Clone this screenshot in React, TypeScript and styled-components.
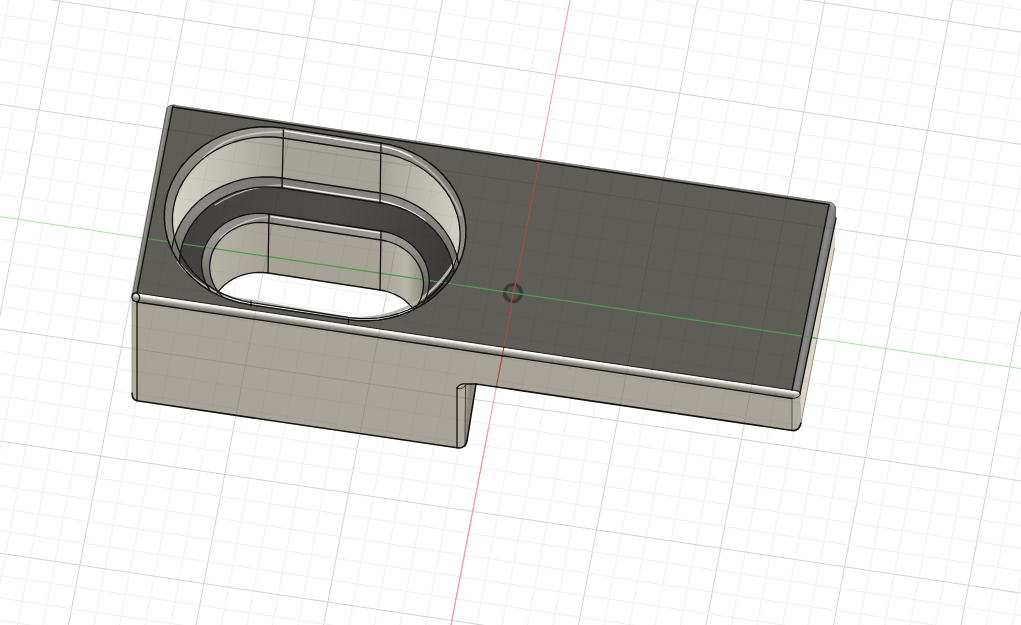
import React from "react";
import styled, { createGlobalStyle } from "styled-components";

type Pt = [number, number];

const GlobalStyle = createGlobalStyle`
  html, body {
    margin: 0;
    padding: 0;
    height: 100%;
    background: #ffffff;
    overflow: hidden;
    font-family: "Liberation Sans", Arial, sans-serif;
  }
`;

const Viewport = styled.main`
  display: flex;
  width: 1021px;
  height: 625px;
  overflow: hidden;
  background: #ffffff;
`;

const Canvas = styled.svg`
  display: block;
  width: 1021px;
  height: 625px;
  filter: blur(0.4px);
`;

const GridLine = styled.line<{ $major: boolean; $tone: "paper" | "model" }>`
  stroke: ${(p) =>
    p.$tone === "paper"
      ? p.$major
        ? "#d2d2d2"
        : "#f0f0f0"
      : p.$major
      ? "rgba(30,28,20,0.12)"
      : "rgba(30,28,20,0.04)"};
  stroke-width: 1;
`;

const Axis = styled.line<{ $color: string; $width?: number }>`
  stroke: ${(p) => p.$color};
  stroke-width: ${(p) => p.$width ?? 1};
`;

const Face = styled.path<{ $fill: string }>`
  fill: ${(p) => p.$fill};
  stroke: none;
`;

const Edge = styled.path<{ $width?: number }>`
  fill: none;
  stroke: #111110;
  stroke-width: ${(p) => p.$width ?? 1.3};
  stroke-linecap: round;
  stroke-linejoin: round;
`;

const Shine = styled.path<{ $color: string; $width: number }>`
  fill: none;
  stroke: ${(p) => p.$color};
  stroke-width: ${(p) => p.$width};
  stroke-linecap: round;
`;

const OriginRing = styled.circle`
  fill: rgba(40, 38, 36, 0.2);
  stroke: rgba(36, 35, 34, 0.55);
  stroke-width: 3.5;
`;

// one grid step along each axis, as drawn on screen
const U: Pt = [124, 18.5];
const V: Pt = [-20.8, 109];

const stadium = (left: Pt, right: Pt, r: number) => {
  const c1: Pt = [left[0] + r * V[0], left[1] + r * V[1]];
  const c2: Pt = [right[0] + r * V[0], right[1] + r * V[1]];
  const pts: string[] = [];
  const arc = (c: Pt, from: number) => {
    for (let i = 0; i <= 30; i++) {
      const a = from + (i / 30) * Math.PI;
      const x = c[0] + r * (U[0] * Math.cos(a) + V[0] * Math.sin(a));
      const y = c[1] + r * (U[1] * Math.cos(a) + V[1] * Math.sin(a));
      pts.push(`${x.toFixed(1)},${y.toFixed(1)}`);
    }
  };
  arc(c2, -Math.PI / 2);
  arc(c1, Math.PI / 2);
  return `M${pts.join(" L")} Z`;
};

const rim = stadium([283, 128], [381, 143], 0.81);
const rimInner = stadium([283, 138], [381, 153], 0.755);
const ledgeOuter = stadium([282, 178], [380, 193], 0.76);
const ledgeInner = stadium([282, 188], [381, 203], 0.7);
const holeOuter = stadium([269, 214], [381, 231], 0.46);
const holeInner = stadium([269, 223], [381, 240], 0.405);
const holeBottom = stadium([268, 273], [380, 290], 0.4);

const silhouette =
  "M167,108 Q169,104.5 175,105 L830,202 Q834,203 835.5,207 L835.5,218 L834.5,248 L801,423 Q799,431.5 792,430.5 L476,384 L467,441 Q465,449 457,447.8 L137,400.8 Q132,399.5 132,393 L132,297 Z";

const GridLines = ({ tone }: { tone: "paper" | "model" }) => {
  const lines: React.ReactElement[] = [];
  for (let i = -24; i <= 24; i++) {
    if (i === 0) continue;
    const x = 570 + 25.5 * i;
    lines.push(
      <GridLine key={`v${i}`} $tone={tone} $major={i % 5 === 0} x1={x} y1={0} x2={x - 119} y2={625} />
    );
  }
  for (let j = -18; j <= 20; j++) {
    if (j === 0) continue;
    const y = 216.6 + 22.44 * j;
    lines.push(
      <GridLine key={`h${j}`} $tone={tone} $major={j % 5 === 0} x1={0} y1={y} x2={1021} y2={y + 152.1} />
    );
  }
  return <g>{lines}</g>;
};

const Pocket = () => (
  <g clipPath="url(#rimClip)">
    <Face $fill="url(#bandGrad)" d={rim} />
    <Face $fill="url(#wallGrad)" d={rimInner} />
    <Face $fill="url(#bandGrad2)" d={ledgeOuter} />
    <Face $fill="url(#ledgeGrad)" d={ledgeInner} />
    <Face $fill="url(#bandGrad3)" d={holeOuter} />
    <Face $fill="url(#innerWallGrad)" d={holeInner} />
  </g>
);

const ModelBody = () => (
  <g>
    <Face $fill="#a8a598" d={silhouette} />
    <Face $fill="#b1aea0" d="M132,297 L137,300 L137,400.8 Q132,399.5 132,393 Z" />
    <Face $fill="#d9d4c5" d="M835.5,218 L834.5,248 L801,423 L800,393 Z" />
    <Face $fill="#7d7b77" d="M167,108 L175,105 L830,202 L829,205 L173,107 Z" />
    <Face $fill="#5f5d58" d="M173,107 L829,204.5 L792,390 L137,293 Z" />
    <Face $fill="url(#leftBand)" d="M167,108 L173,107 L137,293 L132,297 Z" />
    <Face $fill="url(#rightBand)" d="M829,204.5 L835.5,207 L835.5,218 L800,393 L792,390 Z" />
    <Face $fill="url(#frontBand)" d="M137,293 L792,390 L800,393 L792,398.5 L137,302 L132,297 Z" />
    <Face $fill="#b2afa3" d="M792,398.5 L800,393 L801,423 Q799,431.5 792,430.5 Z" />
    <Face $fill="url(#notchGrad)" d="M466,385 L476,384 L466.5,441 Q466,445 465,446 Z" />
    <Face $fill="#b0ada0" d="M457,388 Q460,383.5 466,384 L465,446 Q462,448 457,447.8 Z" />
    <Pocket />
  </g>
);

const Opening = () => (
  <g clipPath="url(#rimClip)">
    <g clipPath="url(#holeClip)">
      <rect x={150} y={240} width={340} height={120} fill="#ffffff" />
      <GridLines tone="paper" />
    </g>
  </g>
);

const App = () => (
  <>
    <GlobalStyle />
    <Viewport>
      <Canvas viewBox="0 0 1021 625" xmlns="http://www.w3.org/2000/svg">
        <defs>
          <clipPath id="modelClip">
            <path d={silhouette} />
          </clipPath>
          <clipPath id="rimClip">
            <path d={rim} />
          </clipPath>
          <clipPath id="holeClip">
            <path d={holeBottom} />
          </clipPath>
          <linearGradient id="wallGrad" gradientUnits="userSpaceOnUse" x1="170" y1="190" x2="462" y2="190">
            <stop offset="0" stopColor="#d6d3c9" />
            <stop offset="0.12" stopColor="#c9c6bb" />
            <stop offset="0.38" stopColor="#a6a398" />
            <stop offset="0.72" stopColor="#a5a296" />
            <stop offset="0.92" stopColor="#c6c3b9" />
            <stop offset="1" stopColor="#d2cfc6" />
          </linearGradient>
          <linearGradient id="innerWallGrad" gradientUnits="userSpaceOnUse" x1="210" y1="260" x2="424" y2="260">
            <stop offset="0" stopColor="#b5b2a6" />
            <stop offset="0.28" stopColor="#a6a396" />
            <stop offset="0.78" stopColor="#a6a396" />
            <stop offset="0.92" stopColor="#b8b5a9" />
            <stop offset="1" stopColor="#8a877c" />
          </linearGradient>
          <linearGradient id="ledgeGrad" gradientUnits="userSpaceOnUse" x1="180" y1="200" x2="455" y2="300">
            <stop offset="0" stopColor="#413f3d" />
            <stop offset="0.5" stopColor="#504e4b" />
            <stop offset="1" stopColor="#393736" />
          </linearGradient>
          <linearGradient id="bandGrad" gradientUnits="userSpaceOnUse" x1="0" y1="128" x2="0" y2="240">
            <stop offset="0" stopColor="#9a9893" />
            <stop offset="0.5" stopColor="#807e78" />
            <stop offset="1" stopColor="#8f8d88" />
          </linearGradient>
          <linearGradient id="bandGrad2" gradientUnits="userSpaceOnUse" x1="0" y1="178" x2="0" y2="270">
            <stop offset="0" stopColor="#7a7873" />
            <stop offset="0.3" stopColor="#8e8c86" />
            <stop offset="1" stopColor="#6c6a65" />
          </linearGradient>
          <linearGradient id="bandGrad3" gradientUnits="userSpaceOnUse" x1="0" y1="214" x2="0" y2="290">
            <stop offset="0" stopColor="#8a8883" />
            <stop offset="0.3" stopColor="#9c9a94" />
            <stop offset="1" stopColor="#66645f" />
          </linearGradient>
          <linearGradient id="leftBand" gradientUnits="userSpaceOnUse" x1="147" y1="200" x2="155" y2="201.55">
            <stop offset="0" stopColor="#5f5d59" />
            <stop offset="0.5" stopColor="#979692" />
            <stop offset="1" stopColor="#5f5d59" />
          </linearGradient>
          <linearGradient id="rightBand" gradientUnits="userSpaceOnUse" x1="810" y1="297" x2="818" y2="298.6">
            <stop offset="0" stopColor="#6b6a68" />
            <stop offset="0.5" stopColor="#8d8d8d" />
            <stop offset="1" stopColor="#77767a" />
          </linearGradient>
          <linearGradient id="frontBand" gradientUnits="userSpaceOnUse" x1="465" y1="341.5" x2="463.7" y2="350.3">
            <stop offset="0" stopColor="#e8e7e2" />
            <stop offset="0.2" stopColor="#ffffff" />
            <stop offset="0.4" stopColor="#c8c6be" />
            <stop offset="0.65" stopColor="#8e8b82" />
            <stop offset="1" stopColor="#6f6d66" />
          </linearGradient>
          <linearGradient id="notchGrad" gradientUnits="userSpaceOnUse" x1="464" y1="410" x2="474" y2="411">
            <stop offset="0" stopColor="#a9a698" />
            <stop offset="0.5" stopColor="#85827a" />
            <stop offset="1" stopColor="#9d9a8d" />
          </linearGradient>
        </defs>

        <GridLines tone="paper" />
        <Axis $color="#f29b9b" x1={570} y1={0} x2={451} y2={625} />
        <Axis $color="#a6e4a2" x1={0} y1={216.6} x2={1021} y2={368.7} />

        <ModelBody />

        <g clipPath="url(#modelClip)">
          <GridLines tone="model" />
          <Axis $color="#a54c48" $width={1.2} x1={570} y1={0} x2={451} y2={625} />
          <Axis $color="#4f9b47" $width={1.2} x1={0} y1={216.6} x2={1021} y2={368.7} />
        </g>

        <Opening />
        <Axis $color="#f29b9b" x1={488.2} y1={430} x2={451} y2={625} />

        {/* fillet highlights */}
        <Shine $color="#f4f4f1" $width={1.6} d="M285,131 L381,146 Q398,149 412,157" />
        <Shine $color="#c7c6c1" $width={1.8} d="M283,132 Q250,131 225,142 Q195,158 178,195" />
        <Shine $color="#b8b7b1" $width={1.6} d="M412,158 Q445,176 461,215" />
        <Shine $color="#f1f1ed" $width={1.3} d="M284,186 L380,200.5 Q405,206 425,220" />
        <Shine $color="#b5b4ae" $width={1.3} d="M282,185 Q245,186 215,205" />
        <Shine $color="#e9e9e5" $width={1.4} d="M271,216.5 L381,233" />
        <Shine $color="#c9c8c2" $width={1.2} d="M268,217 Q240,219 220,238" />
        <Shine $color="#b4b3ad" $width={2.5} d="M178,262 Q205,297 252,301 L348,318 Q420,322 457,258" />

        {/* pocket edges */}
        <g clipPath="url(#rimClip)">
          <Edge d={rimInner} />
          <Edge d={ledgeOuter} />
          <Edge d={ledgeInner} />
          <Edge d={holeOuter} />
          <Edge d={holeInner} />
          <Edge d={holeBottom} />
        </g>
        <Edge $width={1.5} d={rim} />
        <Edge d="M283.5,128 L282,188" />
        <Edge d="M381,143 L380,203" />
        <Edge d="M269,214 L268,273" />
        <Edge d="M381,231 L380,290" />
        <Edge d="M251,301 L251,306" />
        <Edge d="M348.5,318 L348.5,323" />

        {/* model edges: only the lower outline is hard black, the fillet sides stay soft */}
        <Edge $width={1.6} d="M801,423 Q799,431.5 792,430.5 L476,384 L467,441 Q465,449 457,447.8 L137,400.8 Q132,399.5 132,393" />
        <Shine $color="#55534f" $width={0.9} d="M132,297 L167,108 Q169,104.5 175,105" />
        <Shine $color="#8d8a80" $width={0.7} d="M132,297 L132,393" />
        <Shine $color="#55534f" $width={0.8} d="M830,202 Q834,203 835.5,207 L835.5,218" />
        <Shine $color="#7d7a6f" $width={0.7} d="M834.5,248 L801,423" />
        <Edge d="M173,107 L829,204.5" $width={1.5} />
        <Edge d="M173,106 L137,293" />
        <Edge d="M829,204.5 L792,390" />
        <Edge d="M836,218 L800,393" />
        <Edge $width={0.9} d="M137,293 L792,390" />
        <Edge d="M137,302 L792,398.5" />
        <Edge d="M137,302 L137,400.8" />
        <Edge d="M132,297 Q132,292 137,293 Q141,296 139,300 Q138,302 137,302 Q132,301 132,297 Z" />
        <Edge $width={0.9} d="M792,390 Q800,390 800.5,394 Q800,398 792,398.5" />
        <Edge $width={0.6} d="M792,398.5 L792,430" />
        <Edge d="M457,388 L457,447.8" />
        <Edge $width={0.7} d="M465.5,385 L465,446" />
        <Edge d="M457,388 Q460,383 466,384 L476,384" />
        <Edge $width={0.8} d="M457,388 Q461,391 466,385" />

        <OriginRing cx={513} cy={293} r={8.5} />
        <Axis $color="#a54c48" $width={1.2} x1={515.5} y1={283} x2={511} y2={303} />
        <Axis $color="#4f9b47" $width={1.2} x1={503} y1={291.5} x2={523} y2={294.5} />
      </Canvas>
    </Viewport>
  </>
);

export default App;
